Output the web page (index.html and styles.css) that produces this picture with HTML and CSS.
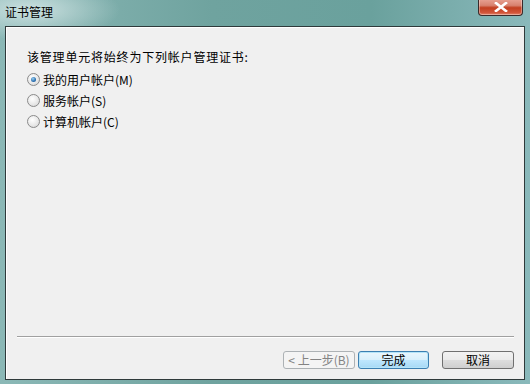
FILE: index.html
```html
<!DOCTYPE html>
<html lang="zh-CN">
<head>
<meta charset="utf-8">
<title>证书管理</title>
<link rel="stylesheet" href="styles.css">
</head>
<body>
<div class="window">
  <div class="titlebar">
    <span class="title">证书管理</span>
    <div class="close">
      <svg width="14" height="10" viewBox="0 0 14 10"><path d="M2 1 L12 9 M12 1 L2 9" stroke="#fff" stroke-width="2.6" stroke-linecap="square"/></svg>
    </div>
  </div>
  <div class="panel">
    <div class="content">
      <p class="prompt">该管理单元将始终为下列帐户管理证书:</p>
      <label class="option"><span class="radio checked"></span><span>我的用户帐户(M)</span></label>
      <label class="option"><span class="radio"></span><span>服务帐户(S)</span></label>
      <label class="option"><span class="radio"></span><span>计算机帐户(C)</span></label>
    </div>
    <div class="separator"></div>
    <div class="footer">
      <button class="btn disabled">&lt; 上一步(B)</button>
      <button class="btn default">完成</button>
      <button class="btn cancel">取消</button>
    </div>
  </div>
</div>
</body>
</html>
```
FILE: styles.css
```css
html, body {
  margin: 0;
  padding: 0;
  width: 530px;
  height: 384px;
  overflow: hidden;
}
body {
  font-family: "Noto Sans CJK SC", "Liberation Sans", sans-serif;
  font-size: 12px;
  color: #000;
}
.window {
  width: 530px;
  height: 384px;
  display: flex;
  flex-direction: column;
  background:
    radial-gradient(ellipse 90px 30px at 30px 10px, rgba(215,232,232,0.85), rgba(215,232,232,0) 100%),
    linear-gradient(to right, #8bb8b6 0%, #6fa39f 40%, #6aa19d 70%, #8ab9bb 100%);
}
.titlebar {
  height: 26px;
  position: relative;
  flex: none;
}
.title {
  position: absolute;
  left: 5px;
  top: 4px;
  line-height: 16px;
  font-size: 12px;
  color: #000;
}
.close {
  position: absolute;
  left: 478px;
  top: -1px;
  width: 45px;
  height: 17px;
  box-sizing: border-box;
  border: 1px solid #3a2a2a;
  border-top: none;
  border-radius: 0 0 4px 4px;
  background: linear-gradient(to bottom, #e8a394 0%, #d8826f 40%, #c23f20 55%, #d2553a 85%, #e2866c 100%);
  display: flex;
  align-items: center;
  justify-content: center;
  box-shadow: inset 0 0 0 1px rgba(255,255,255,0.35);
}
.panel {
  margin: 0 5px;
  flex: 1;
  margin-bottom: 4px;
  background: #f0f0f0;
  border: 1px solid #2f3a3b;
  box-shadow: inset 1px 1px 0 #ffffff;
  display: flex;
  flex-direction: column;
}
.content {
  flex: 1;
  padding: 22px 0 0 21px;
}
.prompt {
  margin: 0 0 4px 0;
  line-height: 16px;
  letter-spacing: 0.8px;
}
.option {
  display: flex;
  align-items: center;
  height: 21px;
  gap: 3px;
}
.radio {
  width: 11px;
  height: 11px;
  border-radius: 50%;
  border: 1px solid #8a8a8a;
  background: radial-gradient(circle at 40% 35%, #ffffff 0%, #e6e6e6 60%, #cfcfcf 100%);
  position: relative;
  flex: none;
}
.radio.checked::after {
  content: "";
  position: absolute;
  left: 3px;
  top: 3px;
  width: 5px;
  height: 5px;
  border-radius: 50%;
  background: radial-gradient(circle at 40% 35%, #9ad0f2 0%, #2a6fb0 60%, #174a85 100%);
}
.separator {
  margin: 0 10px 0 11px;
  border-top: 1px solid #a0a0a0;
  border-bottom: 1px solid #ffffff;
  height: 0;
}
.footer {
  display: flex;
  justify-content: flex-end;
  padding: 13px 10px 10px 0;
  gap: 3px;
}
.btn {
  font-family: "Noto Sans CJK SC", "Liberation Sans", sans-serif;
  font-size: 12px;
  height: 18px;
  width: 72px;
  padding: 0;
  line-height: 14px;
  border: 1px solid #707070;
  border-radius: 3px;
  background: linear-gradient(to bottom, #f2f2f2 0%, #ebebeb 48%, #dddddd 52%, #cfcfcf 100%);
  color: #000;
}
.btn.disabled {
  border-color: #adb2b5;
  background: #f4f4f4;
  color: #838383;
}
.btn.default {
  width: 71px;
  border-color: #3c7fb1;
  background: linear-gradient(to bottom, #eaf6fd 0%, #d9f0fc 48%, #bee6fd 52%, #a7d9f5 100%);
  box-shadow: inset 0 0 0 1px #b5e4f8;
}
.btn.cancel {
  margin-left: 10px;
}
```
